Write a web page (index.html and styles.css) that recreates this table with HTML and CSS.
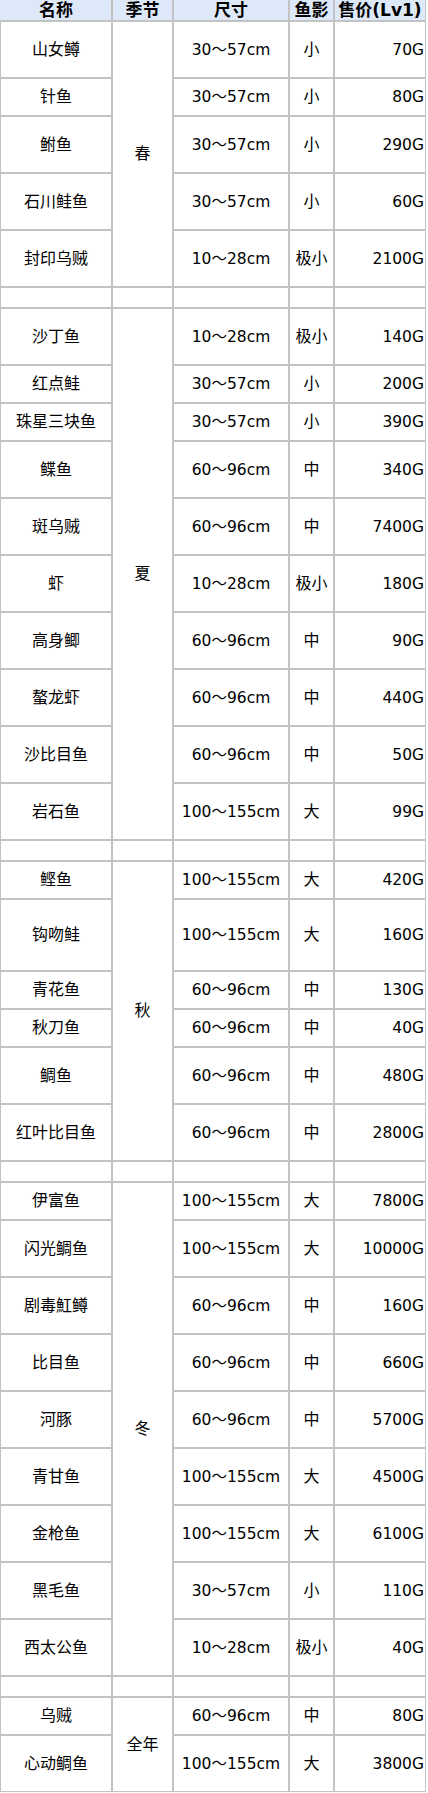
FILE: index.html
```html
<!DOCTYPE html>
<html lang="zh-CN">
<head>
<meta charset="utf-8">
<title>鱼类图鉴</title>
<link rel="stylesheet" href="styles.css">
</head>
<body>
<table class="fish">
<thead>
<tr>
<th class="c-name">名称</th>
<th class="c-season">季节</th>
<th class="c-size">尺寸</th>
<th class="c-shadow">鱼影</th>
<th class="c-price">售价(Lv1)</th>
</tr>
</thead>
<tbody>
<tr class="t"><td>山女鳟</td><td rowspan="5">春</td><td class="num">30～57cm</td><td>小</td><td class="num price">70G</td></tr>
<tr class="s"><td>针鱼</td><td class="num">30～57cm</td><td>小</td><td class="num price">80G</td></tr>
<tr class="t"><td>鲋鱼</td><td class="num">30～57cm</td><td>小</td><td class="num price">290G</td></tr>
<tr class="t"><td>石川鲑鱼</td><td class="num">30～57cm</td><td>小</td><td class="num price">60G</td></tr>
<tr class="t"><td>封印乌贼</td><td class="num">10～28cm</td><td>极小</td><td class="num price">2100G</td></tr>
<tr class="e"><td></td><td></td><td></td><td></td><td></td></tr>

<tr class="t"><td>沙丁鱼</td><td rowspan="10">夏</td><td class="num">10～28cm</td><td>极小</td><td class="num price">140G</td></tr>
<tr class="s"><td>红点鲑</td><td class="num">30～57cm</td><td>小</td><td class="num price">200G</td></tr>
<tr class="s"><td>珠星三块鱼</td><td class="num">30～57cm</td><td>小</td><td class="num price">390G</td></tr>
<tr class="t"><td>鲽鱼</td><td class="num">60～96cm</td><td>中</td><td class="num price">340G</td></tr>
<tr class="t"><td>斑乌贼</td><td class="num">60～96cm</td><td>中</td><td class="num price">7400G</td></tr>
<tr class="t"><td>虾</td><td class="num">10～28cm</td><td>极小</td><td class="num price">180G</td></tr>
<tr class="t"><td>高身鲫</td><td class="num">60～96cm</td><td>中</td><td class="num price">90G</td></tr>
<tr class="t"><td>螯龙虾</td><td class="num">60～96cm</td><td>中</td><td class="num price">440G</td></tr>
<tr class="t"><td>沙比目鱼</td><td class="num">60～96cm</td><td>中</td><td class="num price">50G</td></tr>
<tr class="t"><td>岩石鱼</td><td class="num">100～155cm</td><td>大</td><td class="num price">99G</td></tr>
<tr class="e"><td></td><td></td><td></td><td></td><td></td></tr>

<tr class="s"><td>鲣鱼</td><td rowspan="6">秋</td><td class="num">100～155cm</td><td>大</td><td class="num price">420G</td></tr>
<tr class="x"><td>钩吻鲑</td><td class="num">100～155cm</td><td>大</td><td class="num price">160G</td></tr>
<tr class="s"><td>青花鱼</td><td class="num">60～96cm</td><td>中</td><td class="num price">130G</td></tr>
<tr class="s"><td>秋刀鱼</td><td class="num">60～96cm</td><td>中</td><td class="num price">40G</td></tr>
<tr class="t"><td>鲷鱼</td><td class="num">60～96cm</td><td>中</td><td class="num price">480G</td></tr>
<tr class="t"><td>红叶比目鱼</td><td class="num">60～96cm</td><td>中</td><td class="num price">2800G</td></tr>
<tr class="e"><td></td><td></td><td></td><td></td><td></td></tr>

<tr class="s"><td>伊富鱼</td><td rowspan="9">冬</td><td class="num">100～155cm</td><td>大</td><td class="num price">7800G</td></tr>
<tr class="t"><td>闪光鲷鱼</td><td class="num">100～155cm</td><td>大</td><td class="num price">10000G</td></tr>
<tr class="t"><td>剧毒魟鳟</td><td class="num">60～96cm</td><td>中</td><td class="num price">160G</td></tr>
<tr class="t"><td>比目鱼</td><td class="num">60～96cm</td><td>中</td><td class="num price">660G</td></tr>
<tr class="t"><td>河豚</td><td class="num">60～96cm</td><td>中</td><td class="num price">5700G</td></tr>
<tr class="t"><td>青甘鱼</td><td class="num">100～155cm</td><td>大</td><td class="num price">4500G</td></tr>
<tr class="t"><td>金枪鱼</td><td class="num">100～155cm</td><td>大</td><td class="num price">6100G</td></tr>
<tr class="t"><td>黑毛鱼</td><td class="num">30～57cm</td><td>小</td><td class="num price">110G</td></tr>
<tr class="t"><td>西太公鱼</td><td class="num">10～28cm</td><td>极小</td><td class="num price">40G</td></tr>
<tr class="e"><td></td><td></td><td></td><td></td><td></td></tr>

<tr class="s"><td>乌贼</td><td rowspan="2">全年</td><td class="num">60～96cm</td><td>中</td><td class="num price">80G</td></tr>
<tr class="t"><td>心动鲷鱼</td><td class="num">100～155cm</td><td>大</td><td class="num price">3800G</td></tr>
</tbody>
</table>
</body>
</html>
```

FILE: styles.css
```css
html, body {
  margin: 0;
  padding: 0;
  background: #ffffff;
}

.fish {
  border-collapse: separate;
  border-spacing: 0;
  table-layout: fixed;
  width: 426px;
  font-family: "DejaVu Sans", "Noto Sans CJK SC", sans-serif;
  font-size: 16px;
  color: #000000;
}

.fish th,
.fish td {
  box-sizing: border-box;
  border: 1px solid #c3c3c3;
  padding: 0 2px;
  text-align: center;
  vertical-align: middle;
  line-height: 20px;
  white-space: nowrap;
}

.fish th {
  height: 21px;
  border-top: 0;
  background: #dde9f8;
  font-size: 17px;
  font-weight: bold;
  line-height: 19px;
  padding: 0 1px;
}

.fish th.c-name {
  width: 112px;
  border-left-color: #dde9f8;
}
.fish th.c-season { width: 61px; }
.fish th.c-size { width: 116px; }
.fish th.c-shadow { width: 45px; }
.fish th.c-price { width: 92px; }

.fish td.num {
  font-size: 15.5px;
}

.fish td.price {
  text-align: right;
  padding-right: 1px;
}

.fish tr.t > td { height: 57px; }
.fish tr.s > td { height: 38px; }
.fish tr.x > td { height: 72px; }
.fish tr.e > td { height: 21px; }
```
